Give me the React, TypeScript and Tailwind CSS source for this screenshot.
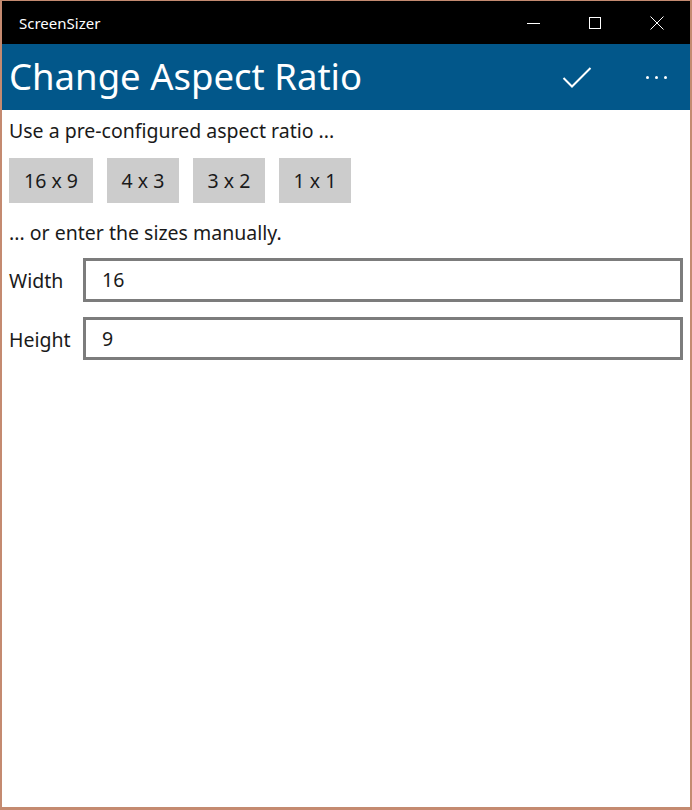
import React from "react";

const font = { fontFamily: '"Noto Sans", "Open Sans", sans-serif' };

export default function App() {
  const presets = [
    { label: "16 x 9", w: "w-[84px]" },
    { label: "4 x 3", w: "w-[72px]" },
    { label: "3 x 2", w: "w-[72px]" },
    { label: "1 x 1", w: "w-[72px]" },
  ];
  return (
    <div
      className="w-[692px] h-[810px] border-t border-l-2 border-r-2 border-b-[3px] border-[#c48a70] bg-white flex flex-col overflow-hidden"
      style={font}
    >
      {/* Title bar */}
      <div className="h-[43px] bg-black flex items-center text-white shrink-0">
        <div className="pl-[17px] text-[15px] flex-1 pt-[1px]">ScreenSizer</div>
        <div className="flex h-full pr-[2px]">
          <div className="w-[62px] flex items-center justify-center">
            <svg width="13" height="12" viewBox="0 0 13 12">
              <line x1="0" y1="6.5" x2="13" y2="6.5" stroke="#fff" strokeWidth="1" />
            </svg>
          </div>
          <div className="w-[62px] flex items-center justify-center">
            <svg width="12" height="12" viewBox="0 0 12 12">
              <rect x="0.5" y="0.5" width="11" height="11" fill="none" stroke="#fff" strokeWidth="1" />
            </svg>
          </div>
          <div className="w-[62px] flex items-center justify-center">
            <svg width="14" height="14" viewBox="0 0 14 14">
              <path d="M0.5 0.5 L13.5 13.5 M13.5 0.5 L0.5 13.5" stroke="#fff" strokeWidth="1" />
            </svg>
          </div>
        </div>
      </div>

      {/* Header */}
      <div className="h-[66px] bg-[#02578a] flex items-center text-white shrink-0">
        <div className="pl-[7px] text-[36.5px] leading-none flex-1 pb-[2px]">Change Aspect Ratio</div>
        <div className="w-[60px] flex items-center justify-center pr-[6px]">
          <svg width="30" height="22" viewBox="0 0 30 22">
            <path d="M1.5 12 L10 20.5 L28.5 2" fill="none" stroke="#fff" strokeWidth="2" />
          </svg>
        </div>
        <div className="w-[80px] flex items-center justify-center gap-[6px] pl-[12px]">
          <span className="w-[3px] h-[3px] bg-white rounded-full" />
          <span className="w-[3px] h-[3px] bg-white rounded-full" />
          <span className="w-[3px] h-[3px] bg-white rounded-full" />
        </div>
      </div>

      {/* Body */}
      <div className="flex flex-col px-[7px] text-[#1a1a1a] text-[19.5px]">
        <div className="leading-[24px] mt-[9px]">Use a pre-configured aspect ratio ...</div>
        <div className="flex gap-[14px] mt-[15px]">
          {presets.map((p) => (
            <div
              key={p.label}
              className={`${p.w} h-[45px] bg-[#cccccc] flex items-center justify-center`}
            >
              {p.label}
            </div>
          ))}
        </div>
        <div className="leading-[24px] mt-[18px]">... or enter the sizes manually.</div>
        <div className="flex items-center mt-[13px]">
          <div className="w-[74px] pt-[2px]">Width</div>
          <div className="w-[600px] h-[44px] border-[3px] border-[#7c7c7c] flex items-center pl-[16px]">16</div>
        </div>
        <div className="flex items-center mt-[15px]">
          <div className="w-[74px] pt-[2px]">Height</div>
          <div className="w-[600px] h-[43px] border-[3px] border-[#7c7c7c] flex items-center pl-[16px]">9</div>
        </div>
      </div>
    </div>
  );
}
